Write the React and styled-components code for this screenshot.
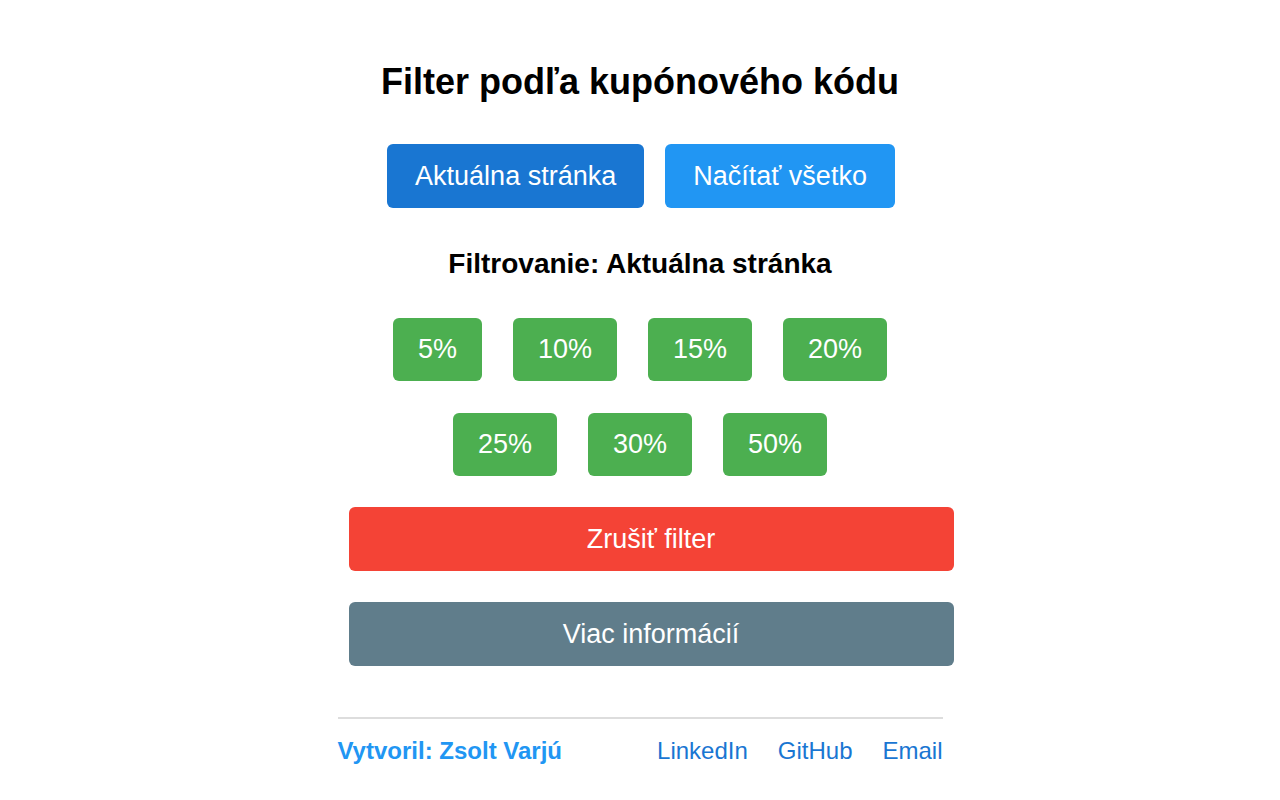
import React, { useState } from 'react'
import styled, { createGlobalStyle } from 'styled-components';

const GlobalStyle = createGlobalStyle`
  html, body {
    margin: 0;
    padding: 0;
    background: #fff;
    font-family: "Liberation Sans", Arial, sans-serif;
  }
`;

const Container = styled.div`
  width: 605px;
  margin: 0 auto;
  padding-top: 61px;
  display: flex;
  flex-direction: column;
`;
const Title = styled.h2`
  margin: 0;
  font-size: 36px;
  line-height: 42px;
  font-weight: 700;
  color: #000;
  text-align: center;
`;
const ModeRow = styled.div`
  display: flex;
  justify-content: center;
  gap: 21px;
  margin-top: 41px;
  padding-left: 2px;
`;
const ModeButton = styled.button`
  height: 64px;
  padding: 0 28px;
  border: none;
  border-radius: 6px;
  font-family: inherit;
  font-size: 27px;
  color: #fff;
  background-color: ${props => props.active ? '#1976D2' : '#2196F3'};
  cursor: pointer;
`;
const Label = styled.h3`
  margin: 40px 0 0;
  font-size: 28px;
  line-height: 32px;
  font-weight: 700;
  color: #000;
  text-align: center;
`;
const PercentGrid = styled.div`
  display: flex;
  flex-wrap: wrap;
  justify-content: center;
  gap: 32px 31px;
  margin-top: 38px;
`;
const PercentButton = styled.button`
  height: 63px;
  padding: 0 25px;
  border: none;
  border-radius: 6px;
  font-family: inherit;
  font-size: 27px;
  color: #fff;
  background-color: #4CAF50;
  cursor: pointer;
`;
const WideButton = styled.button`
  width: 100%;
  height: 64px;
  margin-left: 11px;
  margin-top: 31px;
  border: none;
  border-radius: 6px;
  font-family: inherit;
  font-size: 27px;
  color: #fff;
  background-color: ${props => props.color};
  cursor: pointer;
`;
const Footer = styled.div`
  margin-top: 51px;
  border-top: 2px solid #dddddd;
  padding-top: 18px;
  display: flex;
  justify-content: space-between;
  align-items: center;
  font-size: 24px;
  line-height: 28px;
`;
const Author = styled.span`
  font-weight: 700;
  color: #2196F3;
`;
const Links = styled.div`
  display: flex;
  gap: 30px;
`;
const Link = styled.a`
  color: #1976D2;
  text-decoration: none;
`;

const percents = ['5%', '10%', '15%', '20%', '25%', '30%', '50%'];

const App = () => {
  const [mode, setMode] = useState('page');
  return (
    <Container>
      <GlobalStyle/>
      <Title>Filter podľa kupónového kódu</Title>
      <ModeRow>
        <ModeButton active={mode === 'page'} onClick={() => setMode('page')}>Aktuálna stránka</ModeButton>
        <ModeButton active={mode === 'all'} onClick={() => setMode('all')}>Načítať všetko</ModeButton>
      </ModeRow>
      <Label>Filtrovanie: {mode === 'page' ? 'Aktuálna stránka' : 'Načítať všetko'}</Label>
      <PercentGrid>
        {percents.map(p => <PercentButton key={p}>{p}</PercentButton>)}
      </PercentGrid>
      <WideButton color="#F44336">Zrušiť filter</WideButton>
      <WideButton color="#607D8B">Viac informácií</WideButton>
      <Footer>
        <Author>Vytvoril: Zsolt Varjú</Author>
        <Links>
          <Link href="#">LinkedIn</Link>
          <Link href="#">GitHub</Link>
          <Link href="#">Email</Link>
        </Links>
      </Footer>
    </Container>
  )
}

export default App
